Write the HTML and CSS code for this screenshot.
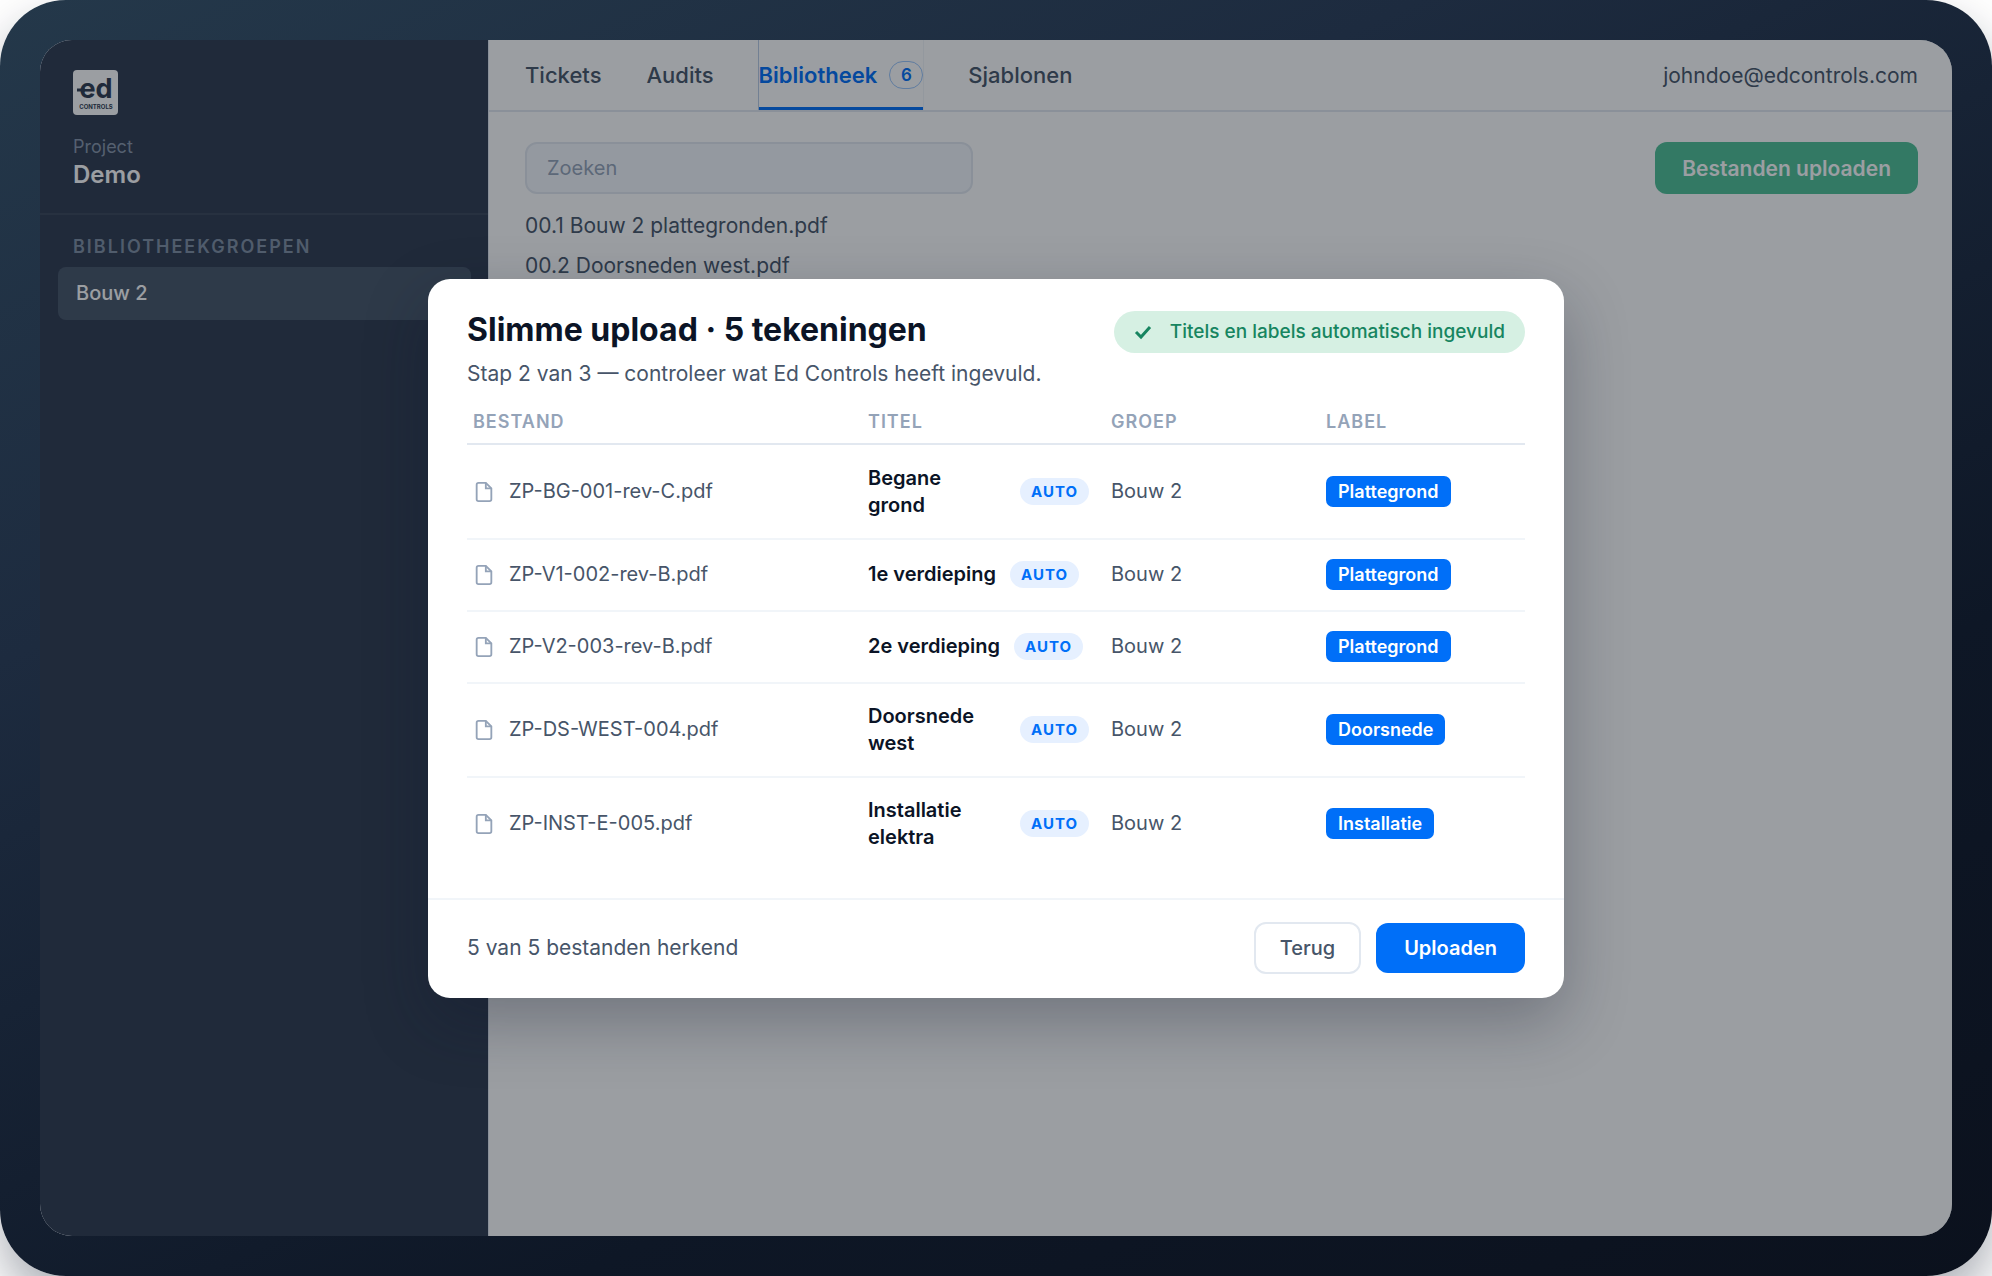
FILE: index.html
```html
<!DOCTYPE html>
<html lang="nl">
	<head>
		<meta charset="UTF-8">
		<meta name="viewport" content="width=device-width, initial-scale=1.0">
		<link rel="stylesheet" href="styles.css">
		<title>Ed Controls - Slimme upload</title>
	</head>
	<body>
		<svg class="sprite" aria-hidden="true">
			<symbol id="icon-file" viewBox="0 0 24 24">
				<path d="M14 2H6a2 2 0 0 0-2 2v16a2 2 0 0 0 2 2h12a2 2 0 0 0 2-2V8z"/>
				<path d="M14 2v6h6"/>
			</symbol>
		</svg>
		<div class="device">
			<div class="screen">
				<aside class="sidebar">
					<div class="project">
						<svg class="logo" viewBox="0 0 45 45" role="img" aria-label="Ed Controls">
							<rect width="45" height="45" rx="4"/>
							<path d="M4 20h8"/>
							<text class="logo-mark" x="23" y="28">ed</text>
							<text class="logo-name" x="23" y="39">CONTROLS</text>
						</svg>
						<span class="project-label">Project</span>
						<strong class="project-name">Demo</strong>
					</div>
					<h2 class="group-title">BIBLIOTHEEKGROEPEN</h2>
					<a class="group" href="#">Bouw 2</a>
				</aside>
				<main class="content">
					<header class="topbar">
						<nav class="tabs">
							<a href="#">Tickets</a>
							<a href="#">Audits</a>
							<a class="active" href="#">Bibliotheek <span class="count">6</span></a>
							<a href="#">Sjablonen</a>
						</nav>
						<span class="user">johndoe@edcontrols.com</span>
					</header>
					<div class="library">
						<div class="toolbar">
							<input class="search" type="search" placeholder="Zoeken" aria-label="Zoeken">
							<button class="upload-button" type="button">Bestanden uploaden</button>
						</div>
						<ul class="files">
							<li>00.1 Bouw 2 plattegronden.pdf</li>
							<li>00.2 Doorsneden west.pdf</li>
						</ul>
					</div>
				</main>

				<div class="overlay">
					<section class="modal" role="dialog" aria-labelledby="modal-title">
						<div class="modal-body">
							<div class="modal-header">
								<div>
									<h1 id="modal-title">Slimme upload · 5 tekeningen</h1>
									<p>Stap 2 van 3 — controleer wat Ed Controls heeft ingevuld.</p>
								</div>
								<span class="status">
									<svg viewBox="0 0 18 18" aria-hidden="true"><path d="M2 9l5 5L16 4"/></svg>
									Titels en labels automatisch ingevuld
								</span>
							</div>
							<table>
								<thead>
									<tr>
										<th class="col-file">BESTAND</th>
										<th class="col-title">TITEL</th>
										<th class="col-group">GROEP</th>
										<th class="col-label">LABEL</th>
									</tr>
								</thead>
								<tbody>
									<tr>
										<td><span class="file"><svg><use href="#icon-file"/></svg>ZP-BG-001-rev-C.pdf</span></td>
										<td><span class="title"><span class="wide">Begane<br>grond</span><span class="auto">AUTO</span></span></td>
										<td>Bouw 2</td>
										<td><span class="tag">Plattegrond</span></td>
									</tr>
									<tr>
										<td><span class="file"><svg><use href="#icon-file"/></svg>ZP-V1-002-rev-B.pdf</span></td>
										<td><span class="title">1e verdieping<span class="auto">AUTO</span></span></td>
										<td>Bouw 2</td>
										<td><span class="tag">Plattegrond</span></td>
									</tr>
									<tr>
										<td><span class="file"><svg><use href="#icon-file"/></svg>ZP-V2-003-rev-B.pdf</span></td>
										<td><span class="title">2e verdieping<span class="auto">AUTO</span></span></td>
										<td>Bouw 2</td>
										<td><span class="tag">Plattegrond</span></td>
									</tr>
									<tr>
										<td><span class="file"><svg><use href="#icon-file"/></svg>ZP-DS-WEST-004.pdf</span></td>
										<td><span class="title"><span class="wide">Doorsnede<br>west</span><span class="auto">AUTO</span></span></td>
										<td>Bouw 2</td>
										<td><span class="tag">Doorsnede</span></td>
									</tr>
									<tr>
										<td><span class="file"><svg><use href="#icon-file"/></svg>ZP-INST-E-005.pdf</span></td>
										<td><span class="title"><span class="wide">Installatie<br>elektra</span><span class="auto">AUTO</span></span></td>
										<td>Bouw 2</td>
										<td><span class="tag">Installatie</span></td>
									</tr>
								</tbody>
							</table>
						</div>
						<footer class="modal-footer">
							<span>5 van 5 bestanden herkend</span>
							<div class="actions">
								<button class="back" type="button">Terug</button>
								<button class="submit" type="button">Uploaden</button>
							</div>
						</footer>
					</section>
				</div>
			</div>
		</div>
	</body>
</html>
```
FILE: styles.css
```css
* {
    box-sizing: border-box;
}

body {
    margin: 0;
    background-color: #FFF;
    color: #475569;
    font-family: Inter, 'Open Sans', sans-serif;
    font-size: 20px;
    line-height: 27px;
}

a {
    color: inherit;
    text-decoration: none;
}

button,
input {
    font-family: inherit;
    font-size: 20px;
}

button {
    cursor: pointer;
}

.sprite {
    display: none;
}

.device {
    display: flex;
    min-height: 100vh;
    padding: 40px;
    border-radius: 66px;
    background: linear-gradient(155deg, #24384A 0%, #1D2B3F 30%, #0E1726 70%, #0B111D 100%);
    box-shadow: 0 24px 48px rgba(15, 23, 42, 0.35);
}

.screen {
    position: relative;
    display: flex;
    flex: 1;
    overflow: hidden;
    border-radius: 32px;
    background-color: #FFF;
}

/* Sidebar */

.sidebar {
    flex: 0 0 448px;
    background-color: #2F3B4F;
    color: #FFF;
}

.project {
    display: flex;
    flex-direction: column;
    padding: 30px 33px 23px;
    border-bottom: 2px solid #3A4759;
}

.logo {
    width: 45px;
    height: 45px;
    margin-bottom: 18px;
}

.logo rect {
    fill: #FFF;
}

.logo path {
    stroke: #2F3B4F;
    stroke-width: 3;
}

.logo text {
    fill: #2F3B4F;
    text-anchor: middle;
    font-weight: 700;
}

.logo-mark {
    font-size: 27px;
}

.logo-name {
    font-size: 6px;
}

.project-label {
    color: #8896AA;
    font-size: 18px;
}

.project-name {
    font-size: 24px;
    font-weight: 600;
    line-height: 30px;
}

.group-title {
    margin: 18px 33px 7px;
    color: #8090A4;
    font-size: 18px;
    font-weight: 600;
    letter-spacing: 2px;
}

.group {
    display: block;
    margin: 0 17px 0 18px;
    padding: 13px 18px;
    border-radius: 8px;
    background-color: #475569;
    font-weight: 500;
}

/* Page behind the modal */

.content {
    flex: 1;
    border-left: 1px solid #E2E8F0;
}

.topbar {
    display: flex;
    justify-content: space-between;
    height: 72px;
    padding: 0 34px 0 36px;
    border-bottom: 2px solid #E2E8F0;
}

.tabs {
    display: flex;
    gap: 45px;
    font-size: 22px;
    font-weight: 500;
}

.tabs a,
.user {
    display: flex;
    align-items: center;
}

.user {
    font-size: 21px;
}

.tabs .active {
    gap: 12px;
    padding-top: 3px;
    border: solid #006FF8;
    border-width: 0 0 3px;
    box-shadow: -1px 0 #B9CCE6, 1px 0 #F1F5F9;
    color: #006FF8;
    font-weight: 600;
}

.count {
    width: 34px;
    height: 28px;
    border: 1px solid #99C5FC;
    border-radius: 14px;
    font-size: 17px;
    line-height: 26px;
    text-align: center;
}

.library {
    padding: 30px 34px 30px 36px;
}

.toolbar {
    display: flex;
    justify-content: space-between;
}

.search {
    width: 448px;
    height: 52px;
    padding: 0 20px;
    border: 2px solid #E2E8F0;
    border-radius: 12px;
    background-color: #F4F7FC;
}

.search::placeholder {
    color: #94A3B8;
}

.upload-button {
    height: 52px;
    padding: 0 27px;
    border: none;
    border-radius: 12px;
    background-color: #4EC096;
    color: #FFF;
    font-size: 21px;
    font-weight: 600;
}

.files {
    margin: 12px 0 0;
    padding: 0;
    list-style: none;
    font-size: 21px;
    line-height: 40px;
}

/* Modal */

.overlay {
    position: absolute;
    inset: 0;
    display: flex;
    align-items: center;
    justify-content: center;
    background-color: rgba(12, 20, 30, 0.41);
}

.modal {
    width: 1136px;
    max-width: 90%;
    border-radius: 22px;
    background-color: #FFF;
    box-shadow: 0 24px 64px rgba(15, 23, 42, 0.3);
}

.modal-body {
    padding: 32px 39px 28px;
}

.modal-header {
    display: flex;
    align-items: flex-start;
    justify-content: space-between;
}

.modal h1 {
    margin: 0;
    color: #0B1426;
    font-size: 32px;
    font-weight: 700;
    line-height: 38px;
}

.modal p {
    margin: 11px 0 7px;
    font-size: 21px;
}

.status {
    display: flex;
    align-items: center;
    gap: 18px;
    height: 42px;
    padding: 0 20px;
    border-radius: 21px;
    background-color: #D6F0E3;
    color: #178560;
    font-size: 19px;
    font-weight: 500;
}

.status svg {
    width: 18px;
    height: 18px;
    fill: none;
    stroke: currentColor;
    stroke-width: 3;
}

table {
    width: 100%;
    table-layout: fixed;
    border-spacing: 0;
}

th {
    padding: 14px 16px 8px 6px;
    border-bottom: 2px solid #E2E8F0;
    color: #94A3B8;
    font-size: 18px;
    font-weight: 600;
    letter-spacing: 1px;
    text-align: left;
}

.col-file {
    width: 395px;
}

.col-title {
    width: 243px;
}

.col-group {
    width: 215px;
}

td {
    height: 72px;
    padding: 19px 16px 19px 6px;
    border-bottom: 2px solid #F1F5F9;
}

tbody tr:first-child td {
    padding-top: 20px;
}

tbody tr:last-child td {
    border-bottom: none;
}

.file,
.title {
    display: flex;
    align-items: center;
    gap: 14px;
}

.file svg {
    width: 22px;
    height: 22px;
    fill: none;
    stroke: #94A3B8;
    stroke-width: 2;
}

.title {
    color: #0B1426;
    font-weight: 600;
}

.wide {
    flex: 1;
}

.auto {
    padding: 0 11px;
    border-radius: 14px;
    background-color: #E6F0FF;
    color: #006FF8;
    font-size: 15px;
    font-weight: 700;
    letter-spacing: 1px;
}

.tag {
    display: inline-block;
    padding: 2px 12px;
    border-radius: 7px;
    background-color: #006FF8;
    color: #FFF;
    font-size: 18px;
    font-weight: 600;
}

.modal-footer {
    display: flex;
    align-items: center;
    justify-content: space-between;
    padding: 22px 39px 24px;
    border-top: 2px solid #F1F5F9;
    font-size: 21px;
}

.actions {
    display: flex;
    align-items: center;
    gap: 15px;
}

.back {
    height: 52px;
    padding: 0 24px;
    border: 2px solid #E2E8F0;
    border-radius: 12px;
    background-color: #FFF;
    color: #475569;
    font-weight: 500;
}

.submit {
    height: 50px;
    padding: 0 28px;
    border: none;
    border-radius: 12px;
    background-color: #006FF8;
    color: #FFF;
    font-weight: 600;
}
```
